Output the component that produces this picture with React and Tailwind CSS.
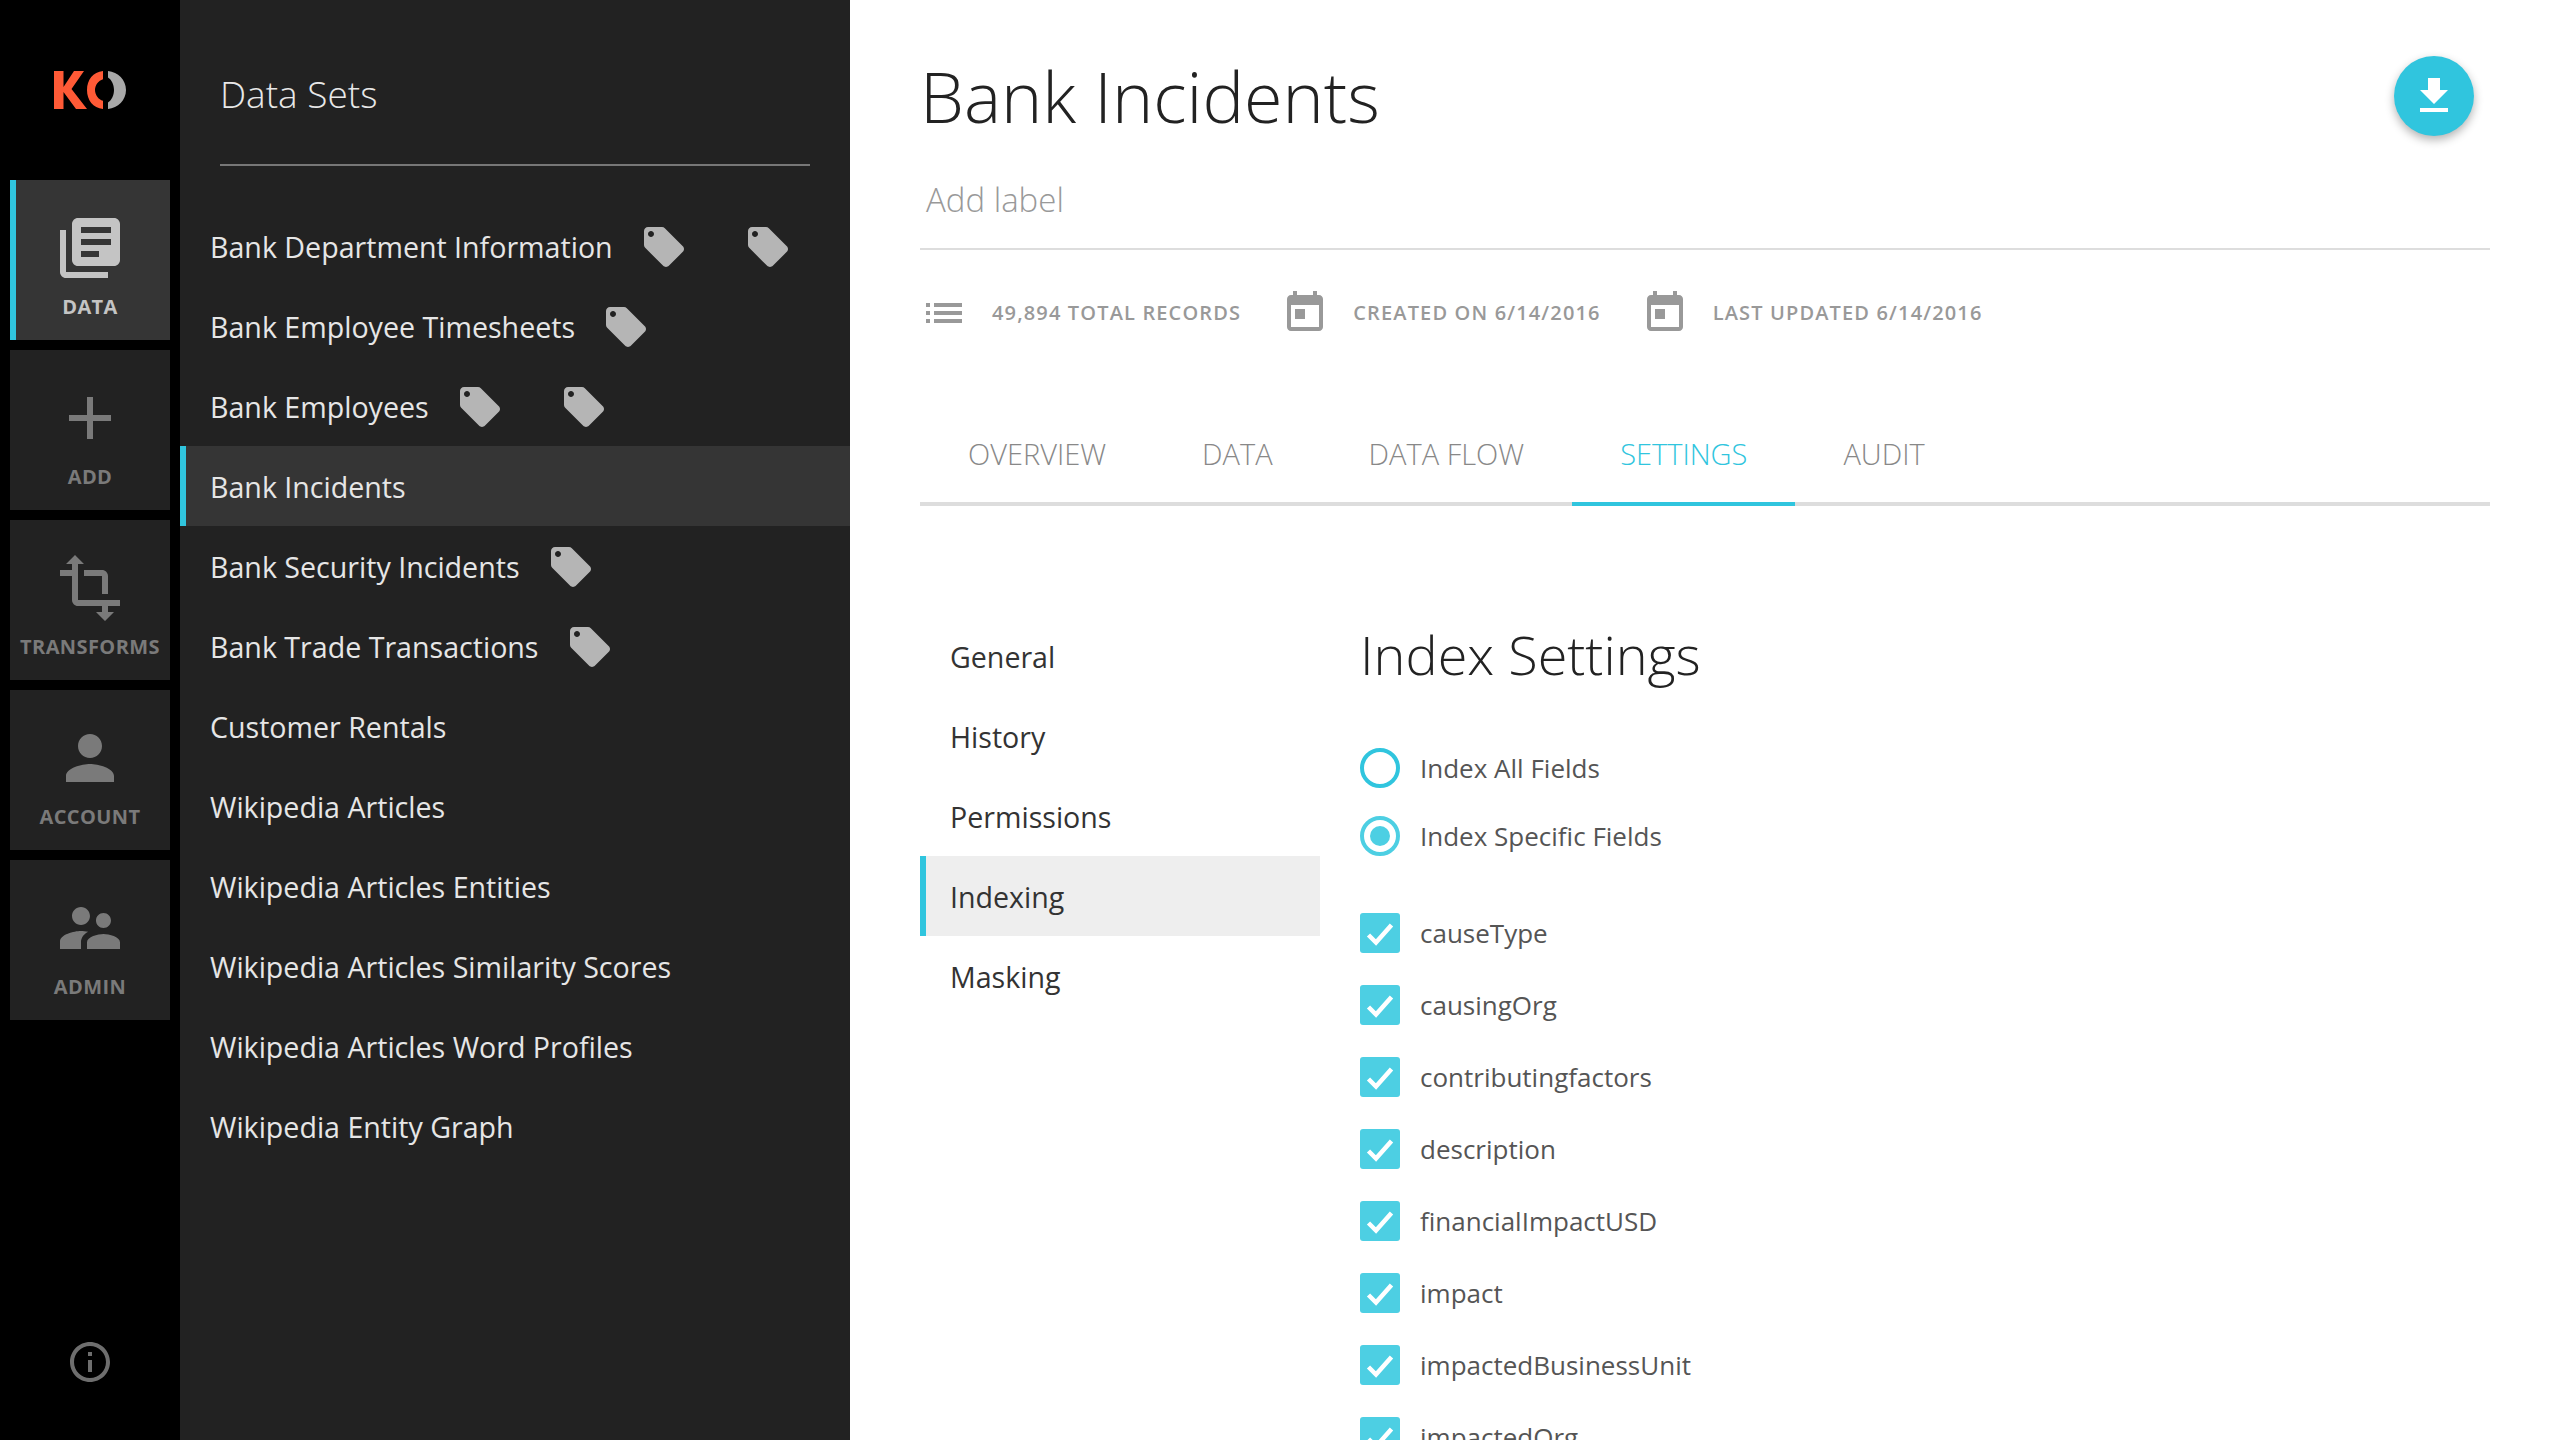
import { useState } from 'react';

const ICONS = {
  data: 'M4 6H2v14c0 1.1.9 2 2 2h14v-2H4V6zm16-4H8c-1.1 0-2 .9-2 2v12c0 1.1.9 2 2 2h12c1.1 0 2-.9 2-2V4c0-1.1-.9-2-2-2zm-1 9H9V9h10v2zm-4 4H9v-2h6v2zm4-8H9V5h10v2z',
  add: 'M19 13h-6v6h-2v-6H5v-2h6V5h2v6h6v2z',
  transforms: 'M22 18v-2H8V4h2L7 1 4 4h2v2H2v2h4v8c0 1.1.9 2 2 2h8v2h-2l3 3 3-3h-2v-2h4zM10 8h6v6h2V8c0-1.1-.9-2-2-2h-6v2z',
  account: 'M12 12c2.21 0 4-1.79 4-4s-1.79-4-4-4-4 1.79-4 4 1.79 4 4 4zm0 2c-2.67 0-8 1.34-8 4v2h16v-2c0-2.66-5.33-4-8-4z',
  admin: 'M16.5 12c1.38 0 2.49-1.12 2.49-2.5S17.88 7 16.5 7C15.12 7 14 8.12 14 9.5s1.12 2.5 2.5 2.5zM9 11c1.66 0 2.99-1.34 2.99-3S10.66 5 9 5C7.34 5 6 6.34 6 8s1.34 3 3 3zm7.5 3c-1.83 0-5.5.92-5.5 2.75V19h11v-2.25c0-1.83-3.67-2.75-5.5-2.75zM9 13c-2.33 0-7 1.17-7 3.5V19h7v-2.25c0-.85.33-2.34 2.37-3.47C10.5 13.1 9.66 13 9 13z',
  info: 'M11 17h2v-6h-2v6zm1-15C6.48 2 2 6.48 2 12s4.48 10 10 10 10-4.48 10-10S17.52 2 12 2zm0 18c-4.41 0-8-3.59-8-8s3.59-8 8-8 8 3.59 8 8-3.59 8-8 8zM11 9h2V7h-2v2z',
  list: 'M3 13h2v-2H3v2zm0 4h2v-2H3v2zm0-8h2V7H3v2zm4 4h14v-2H7v2zm0 4h14v-2H7v2zM7 7v2h14V7H7z',
  event: 'M7 10h5v5H7zM16 1v2H8V1H6v2H5c-1.11 0-1.99.9-1.99 2L3 19c0 1.1.89 2 2 2h14c1.1 0 2-.9 2-2V5c0-1.1-.9-2-2-2h-1V1h-2zm3 18H5V8h14v11z',
  download: 'M19 9h-4V3H9v6H5l7 7 7-7zM5 18v2h14v-2H5z',
  tag: 'M21.41 11.58l-9-9C12.05 2.22 11.55 2 11 2H4c-1.1 0-2 .9-2 2v7c0 .55.22 1.05.59 1.42l9 9c.36.36.86.58 1.41.58.55 0 1.05-.22 1.41-.59l7-7c.37-.36.59-.86.59-1.41 0-.55-.23-1.06-.59-1.42zM5.5 7C4.67 7 4 6.33 4 5.5S4.67 4 5.5 4 7 4.67 7 5.5 6.33 7 5.5 7z',
};

function Icon({ name, className }) {
  return (
    <svg viewBox="0 0 24 24" fill="currentColor" className={className}>
      <path d={ICONS[name]} />
    </svg>
  );
}

function Logo() {
  return (
    <svg viewBox="0 0 72 38" className="w-[72px] h-[38px]">
      <path d="M0 0h9.500v16L20 0h10L17.500 18 33 38H22L9.500 21v17H0z" fill="#ff5a36" />
      <path d="M49 0v8.200C44.500 9.500 41 14 41 19s3.500 9.500 8 10.800V38C39 37.200 33 29 33 19S39 .8 49 0z" fill="#ff5a36" />
      <path d="M54 0c10 .8 18 9 18 19s-8 18.200-18 19v-6.500c3.500-2 6-7 6-12.500s-2.500-10.500-6-12.500z" fill="#a8a8a8" />
    </svg>
  );
}

const RAIL = [
  { icon: 'data', label: 'DATA', active: true },
  { icon: 'add', label: 'ADD' },
  { icon: 'transforms', label: 'TRANSFORMS' },
  { icon: 'account', label: 'ACCOUNT' },
  { icon: 'admin', label: 'ADMIN' },
];

const DATASETS = [
  { name: 'Bank Department Information', tags: 2 },
  { name: 'Bank Employee Timesheets', tags: 1 },
  { name: 'Bank Employees', tags: 2 },
  { name: 'Bank Incidents', active: true },
  { name: 'Bank Security Incidents', tags: 1 },
  { name: 'Bank Trade Transactions', tags: 1 },
  { name: 'Customer Rentals' },
  { name: 'Wikipedia Articles' },
  { name: 'Wikipedia Articles Entities' },
  { name: 'Wikipedia Articles Similarity Scores' },
  { name: 'Wikipedia Articles Word Profiles' },
  { name: 'Wikipedia Entity Graph' },
];

const TABS = ['OVERVIEW', 'DATA', 'DATA FLOW', 'SETTINGS', 'AUDIT'];
const SECTIONS = ['General', 'History', 'Permissions', 'Indexing', 'Masking'];
const FIELDS = [
  'causeType',
  'causingOrg',
  'contributingfactors',
  'description',
  'financialImpactUSD',
  'impact',
  'impactedBusinessUnit',
  'impactedOrg',
];

function Stat({ icon, children }) {
  return (
    <div className="flex items-center gap-6">
      <Icon name={icon} className="w-12 h-12 text-[#999999]" />
      <span className="text-[20px] font-semibold tracking-[1.15px] text-[#999999]">{children}</span>
    </div>
  );
}

export default function App() {
  const [mode, setMode] = useState('specific');

  return (
    <div className="flex h-screen overflow-hidden bg-white font-['Open_Sans',sans-serif]">
      <aside className="w-[180px] shrink-0 bg-black flex flex-col items-center">
        <div className="h-[180px] w-full flex items-start justify-center pt-[71px]">
          <Logo />
        </div>
        <nav className="flex flex-col gap-[10px]">
          {RAIL.map((item) => (
            <button
              key={item.label}
              type="button"
              className={`w-[160px] h-[160px] flex flex-col items-center pt-[32px] ${
                item.active
                  ? 'bg-[#353535] text-[#c4c4c4] border-l-[6px] border-[#30c5de] pr-[6px]'
                  : 'bg-[#222222] text-[#7a7a7a]'
              }`}
            >
              <Icon name={item.icon} className="w-[72px] h-[72px]" />
              <span className="text-[20px] leading-[28px] font-bold tracking-[0.4px] mt-[9px]">{item.label}</span>
            </button>
          ))}
        </nav>
        <div className="mt-auto pb-[54px]">
          <Icon name="info" className="w-12 h-12 text-[#6e6e6e]" />
        </div>
      </aside>

      <section className="w-[670px] shrink-0 bg-[#222222]">
        <div className="mx-[40px] h-[166px] border-b-2 border-[#777777] flex items-start pt-[69px]">
          <h2 className="text-[37px] leading-[50px] font-light text-[#e8e8e8]">Data Sets</h2>
        </div>
        <ul className="mt-[40px]">
          {DATASETS.map((ds) => (
            <li
              key={ds.name}
              className={`h-[80px] flex items-center ${
                ds.active ? 'bg-[#353535] border-l-[6px] border-[#30c5de] pl-[24px]' : 'pl-[30px]'
              }`}
            >
              <span className="text-[28.6px] leading-[40px] text-[#e6e6e6] mt-[2px]">{ds.name}</span>
              {ds.tags > 0 && <Icon name="tag" className="w-12 h-12 ml-[27px] mt-[1px] text-[#b5b5b5]" />}
              {ds.tags > 1 && <Icon name="tag" className="w-12 h-12 ml-[56px] mt-[1px] text-[#b5b5b5]" />}
            </li>
          ))}
        </ul>
      </section>

      <main className="flex-1 min-w-0 px-[70px]">
        <div className="relative h-[250px] border-b-2 border-[#dddddd]">
          <h1 className="pt-[46px] text-[70px] leading-[100px] font-light text-[#222222]">Bank Incidents</h1>
          <p className="pl-[6px] mt-[32px] text-[33px] leading-[44px] font-light text-[#999999]">Add label</p>
          <button
            type="button"
            className="absolute right-[16px] top-[56px] w-20 h-20 rounded-full bg-[#30c5de] flex items-center justify-center text-white shadow-[0_4px_10px_rgba(0,0,0,0.3)]"
          >
            <Icon name="download" className="w-12 h-12" />
          </button>
        </div>

        <div className="flex items-center gap-10 mt-[39px]">
          <Stat icon="list">49,894 TOTAL RECORDS</Stat>
          <Stat icon="event">CREATED ON 6/14/2016</Stat>
          <Stat icon="event">LAST UPDATED 6/14/2016</Stat>
        </div>

        <div className="flex mt-[77px] h-[92px] border-b-4 border-[#dddddd]">
          {TABS.map((tab) => (
            <div
              key={tab}
              className={`px-[48px] h-[92px] pb-[8px] flex items-center text-[29px] font-light border-b-4 ${
                tab === 'SETTINGS' ? 'text-[#30c5de] border-[#30c5de]' : 'text-[#888888] border-transparent'
              }`}
            >
              {tab}
            </div>
          ))}
        </div>

        <div className="flex mt-[110px]">
          <ul className="w-[400px] shrink-0">
            {SECTIONS.map((s) => (
              <li
                key={s}
                className={`h-[80px] flex items-center text-[28.6px] text-[#333333] ${
                  s === 'Indexing' ? 'bg-[#eeeeee] border-l-[6px] border-[#30c5de] pl-[24px]' : 'pl-[30px]'
                }`}
              >
                <span className="mt-[3px]">{s}</span>
              </li>
            ))}
          </ul>
          <div className="ml-[40px]">
            <h2 className="text-[54px] leading-[76px] font-light text-[#222222]">Index Settings</h2>
            <div className="mt-[56px] flex flex-col gap-[28px]">
              <label className="flex items-center gap-[20px]" onClick={() => setMode('all')}>
                <span className="w-10 h-10 rounded-full border-4 border-[#30c5de]" />
                <span className="text-[26px] leading-[40px] text-[#555555]">Index All Fields</span>
              </label>
              <label className="flex items-center gap-[20px]" onClick={() => setMode('specific')}>
                <span className="w-10 h-10 rounded-full border-4 border-[#4dcfe3] flex items-center justify-center">
                  <span className="w-5 h-5 rounded-full bg-[#4dcfe3]" />
                </span>
                <span className="text-[26px] leading-[40px] text-[#555555]">Index Specific Fields</span>
              </label>
            </div>
            <div className="mt-[57px] flex flex-col gap-[32px]">
              {FIELDS.map((f) => (
                <label key={f} className="flex items-center gap-[20px]">
                  <span className="w-10 h-10 rounded-[3px] bg-[#4dcfe3] flex items-center justify-center">
                    <svg viewBox="0 0 40 40" className="w-10 h-10" fill="none" stroke="white" strokeWidth="4.5">
                      <path d="M8.500 22l7.500 7.500L31.500 12" />
                    </svg>
                  </span>
                  <span className="text-[26px] leading-[40px] text-[#555555] -mt-[1px]">{f}</span>
                </label>
              ))}
            </div>
          </div>
        </div>
      </main>
    </div>
  );
}
